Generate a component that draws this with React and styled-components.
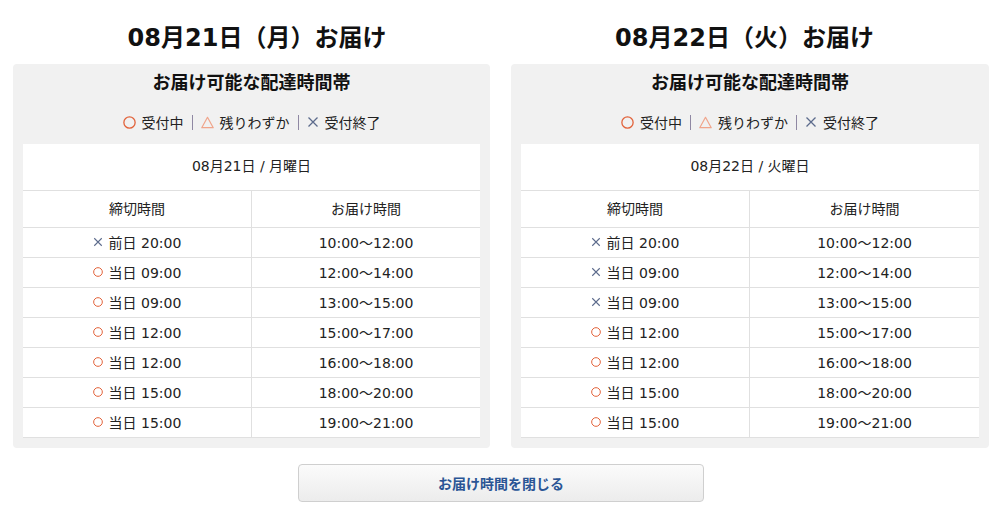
import React from "react";
import styled, { createGlobalStyle } from "styled-components";

const GlobalStyle = createGlobalStyle`
  html, body { margin: 0; padding: 0; background: #fff; }
  body {
    font-family: "DejaVu Sans", "Noto Sans CJK JP", sans-serif;
    color: #222;
  }
`;

const Page = styled.div`
  width: 976px;
  margin: 0 0 0 13px;
  padding-top: 18px;
`;

const Columns = styled.div`
  display: grid;
  grid-template-columns: 477px 478px;
  column-gap: 21px;
`;

const Day = styled.section`
  display: flex;
  flex-direction: column;
`;

const DayTitle = styled.h2`
  margin: 0 0 6px;
  height: 40px;
  line-height: 40px;
  font-size: 24px;
  font-weight: 700;
  color: #111;
  text-align: center;
  padding: ${(p) => (p.$side === "left" ? "0 0 0 11px" : "0 11px 0 0")};
`;

const Panel = styled.div`
  background: #f1f1f1;
  border-radius: 4px;
  padding: 4px 10px 10px;
`;

const PanelTitle = styled.h3`
  margin: 0;
  height: 30px;
  line-height: 30px;
  font-size: 18px;
  font-weight: 700;
  color: #111;
  text-align: center;
`;

const Legend = styled.div`
  display: flex;
  align-items: center;
  justify-content: center;
  height: 22px;
  padding-bottom: 2px;
  margin: 13px 0 9px;
  font-size: 14px;
  color: #222;
`;

const LegendItem = styled.span`
  display: inline-flex;
  align-items: center;
  gap: 6px;
`;

const Sep = styled.span`
  display: inline-block;
  width: 1px;
  height: 15px;
  background: #8f88a3;
  margin: 0 8px;
`;

const Table = styled.div`
  background: #fff;
  font-size: 14px;
  color: #222;
`;

const DateRow = styled.div`
  height: 47px;
  box-sizing: border-box;
  padding-bottom: 4px;
  display: flex;
  align-items: center;
  justify-content: center;
  border-bottom: 1px solid #e0e0e0;
`;

const Row = styled.div`
  display: grid;
  grid-template-columns: 228px 1fr;
  border-bottom: 1px solid #e0e0e0;
  height: ${(p) => (p.$head ? 36 : 29)}px;
`;

const Cell = styled.div`
  display: flex;
  align-items: center;
  justify-content: center;
  gap: 6px;
  padding-bottom: ${(p) => (p.$head ? 3 : 1)}px;
  & + & {
    border-left: 1px solid #e0e0e0;
  }
`;

const Button = styled.button`
  display: block;
  margin: 16px auto 0;
  width: 406px;
  height: 38px;
  border: 1px solid #cfcfcf;
  border-radius: 4px;
  background: linear-gradient(#fbfbfb, #ececec);
  color: #2a5595;
  font-family: "Noto Sans CJK JP", "Noto Sans", sans-serif;
  font-size: 14px;
  font-weight: 700;
  cursor: pointer;
`;

const MarkSvg = styled.svg`
  display: block;
  flex: none;
`;

function Mark({ type, size = 10 }) {
  if (type === "o") {
    return (
      <MarkSvg width={size} height={size} viewBox="0 0 12 12">
        <circle cx="6" cy="6" r="5.2" fill="none" stroke="#e2633b" strokeWidth="1.2" />
      </MarkSvg>
    );
  }
  if (type === "t") {
    return (
      <MarkSvg width={size} height={size} viewBox="0 0 12 12">
        <path d="M6 1.2 L11.3 10.8 L0.7 10.8 Z" fill="none" stroke="#f0a58b" strokeWidth="1.1" strokeLinejoin="round" />
      </MarkSvg>
    );
  }
  return (
    <MarkSvg width={size} height={size} viewBox="0 0 12 12">
      <path d="M1.5 1.5 L10.5 10.5 M10.5 1.5 L1.5 10.5" stroke="#5c6b8c" strokeWidth="1.3" />
    </MarkSvg>
  );
}

const days = [
  {
    side: "left",
    title: "08月21日（月）お届け",
    date: "08月21日 / 月曜日",
    rows: [
      ["x", "前日 20:00", "10:00〜12:00"],
      ["o", "当日 09:00", "12:00〜14:00"],
      ["o", "当日 09:00", "13:00〜15:00"],
      ["o", "当日 12:00", "15:00〜17:00"],
      ["o", "当日 12:00", "16:00〜18:00"],
      ["o", "当日 15:00", "18:00〜20:00"],
      ["o", "当日 15:00", "19:00〜21:00"],
    ],
  },
  {
    side: "right",
    title: "08月22日（火）お届け",
    date: "08月22日 / 火曜日",
    rows: [
      ["x", "前日 20:00", "10:00〜12:00"],
      ["x", "当日 09:00", "12:00〜14:00"],
      ["x", "当日 09:00", "13:00〜15:00"],
      ["o", "当日 12:00", "15:00〜17:00"],
      ["o", "当日 12:00", "16:00〜18:00"],
      ["o", "当日 15:00", "18:00〜20:00"],
      ["o", "当日 15:00", "19:00〜21:00"],
    ],
  },
];

export default function App() {
  return (
    <>
      <GlobalStyle />
      <Page>
        <Columns>
          {days.map((d) => (
            <Day key={d.title}>
              <DayTitle $side={d.side}>{d.title}</DayTitle>
              <Panel>
                <PanelTitle>お届け可能な配達時間帯</PanelTitle>
                <Legend>
                  <LegendItem>
                    <Mark type="o" size={13} />
                    受付中
                  </LegendItem>
                  <Sep />
                  <LegendItem>
                    <Mark type="t" size={13} />
                    残りわずか
                  </LegendItem>
                  <Sep />
                  <LegendItem>
                    <Mark type="x" size={12} />
                    受付終了
                  </LegendItem>
                </Legend>
                <Table>
                  <DateRow>{d.date}</DateRow>
                  <Row $head>
                    <Cell $head>締切時間</Cell>
                    <Cell $head>お届け時間</Cell>
                  </Row>
                  {d.rows.map((r, i) => (
                    <Row key={i}>
                      <Cell>
                        <Mark type={r[0]} size={10} />
                        {r[1]}
                      </Cell>
                      <Cell>{r[2]}</Cell>
                    </Row>
                  ))}
                </Table>
              </Panel>
            </Day>
          ))}
        </Columns>
        <Button>お届け時間を閉じる</Button>
      </Page>
    </>
  );
}
